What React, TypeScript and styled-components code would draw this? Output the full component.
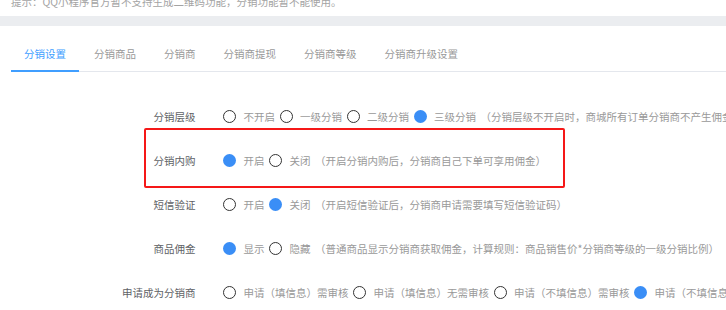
import styled, { createGlobalStyle } from 'styled-components';

const GlobalStyle = createGlobalStyle`
  html, body {
    margin: 0;
    padding: 0;
    background: #fff;
    overflow: hidden;
  }
  body {
    font-family: 'Noto Sans CJK SC', 'Noto Sans', sans-serif;
  }
`;

interface Option {
  label: string;
  checked?: boolean;
}

interface Setting {
  label: string;
  options: Option[];
  note?: string;
}

const tabs = ['分销设置', '分销商品', '分销商', '分销商提现', '分销商等级', '分销商升级设置'];

const settings: Setting[] = [
  {
    label: '分销层级',
    options: [
      { label: '不开启' },
      { label: '一级分销' },
      { label: '二级分销' },
      { label: '三级分销', checked: true },
    ],
    note: '（分销层级不开启时，商城所有订单分销商不产生佣金）',
  },
  {
    label: '分销内购',
    options: [{ label: '开启', checked: true }, { label: '关闭' }],
    note: '（开启分销内购后，分销商自己下单可享用佣金）',
  },
  {
    label: '短信验证',
    options: [{ label: '开启' }, { label: '关闭', checked: true }],
    note: '（开启短信验证后，分销商申请需要填写短信验证码）',
  },
  {
    label: '商品佣金',
    options: [{ label: '显示', checked: true }, { label: '隐藏' }],
    note: '（普通商品显示分销商获取佣金，计算规则：商品销售价*分销商等级的一级分销比例）',
  },
  {
    label: '申请成为分销商',
    options: [
      { label: '申请（填信息）需审核' },
      { label: '申请（填信息）无需审核' },
      { label: '申请（不填信息）需审核' },
      { label: '申请（不填信息）无需审核', checked: true },
    ],
  },
];

export default function App() {
  return (
    <>
      <GlobalStyle />
      <Notice>提示：QQ小程序官方暂不支持生成二维码功能，分销功能暂不能使用。</Notice>
      <Band />
      <Panel>
        <TabBar>
          {tabs.map((t, i) => (
            <TabItem key={t} active={i === 0}>
              {t}
            </TabItem>
          ))}
        </TabBar>
        <Form>
          {settings.map(s => (
            <Row key={s.label}>
              <Label>{s.label}</Label>
              <Content>
                {s.options.map(o => (
                  <RadioItem key={o.label}>
                    <RadioCircle checked={!!o.checked} />
                    <RadioText>{o.label}</RadioText>
                  </RadioItem>
                ))}
                {s.note && <Note>{s.note}</Note>}
              </Content>
            </Row>
          ))}
          <Highlight />
        </Form>
      </Panel>
    </>
  );
}

const Notice = styled.div`
  margin-top: -8px;
  height: 24px;
  line-height: 20px;
  padding-left: 11px;
  font-size: 10.5px;
  color: #a3a3a3;
  white-space: nowrap;
`;

const Band = styled.div`
  height: 10px;
  background: #ebedf0;
`;

const Panel = styled.div`
  background: #fff;
`;

const TabBar = styled.div`
  display: flex;
  gap: 2px;
  margin: 0 0 0 11px;
  padding-top: 10px;
  border-bottom: 1px solid #e4e7ed;
  white-space: nowrap;
`;

const TabItem = styled.div<{ active?: boolean }>`
  padding: 0 13px;
  height: 35px;
  line-height: 35px;
  font-size: 10.5px;
  color: ${p => (p.active ? '#409eff' : '#999')};
  box-shadow: ${p => (p.active ? 'inset 0 -1px 0 #409eff, 0 1px 0 #409eff' : 'none')};
`;

const Form = styled.div`
  position: relative;
  padding-top: 22px;
`;

const Row = styled.div`
  display: flex;
  align-items: center;
  height: 44px;
  white-space: nowrap;
`;

const Label = styled.div`
  flex: none;
  width: 195.5px;
  text-align: right;
  font-size: 10.5px;
  color: #606266;
`;

const Content = styled.div`
  display: flex;
  align-items: center;
  margin-left: 27.5px;
`;

const RadioItem = styled.label`
  display: inline-flex;
  align-items: center;
  margin-right: 4.5px;
`;

const RadioCircle = styled.span<{ checked: boolean }>`
  box-sizing: border-box;
  width: 13px;
  height: 13px;
  border-radius: 50%;
  margin-right: 7.5px;
  border: ${p => (p.checked ? 'none' : '1.5px solid #333')};
  background: ${p => (p.checked ? '#3a8ef6' : '#fff')};
`;

const RadioText = styled.span`
  font-size: 10.5px;
  color: #999;
`;

const Note = styled.span`
  font-size: 10.5px;
  color: #999;
`;

const Highlight = styled.div`
  position: absolute;
  left: 144px;
  top: 56px;
  width: 421px;
  height: 60px;
  box-sizing: border-box;
  border: 2px solid #f51818;
  border-radius: 2px;
  pointer-events: none;
`;
